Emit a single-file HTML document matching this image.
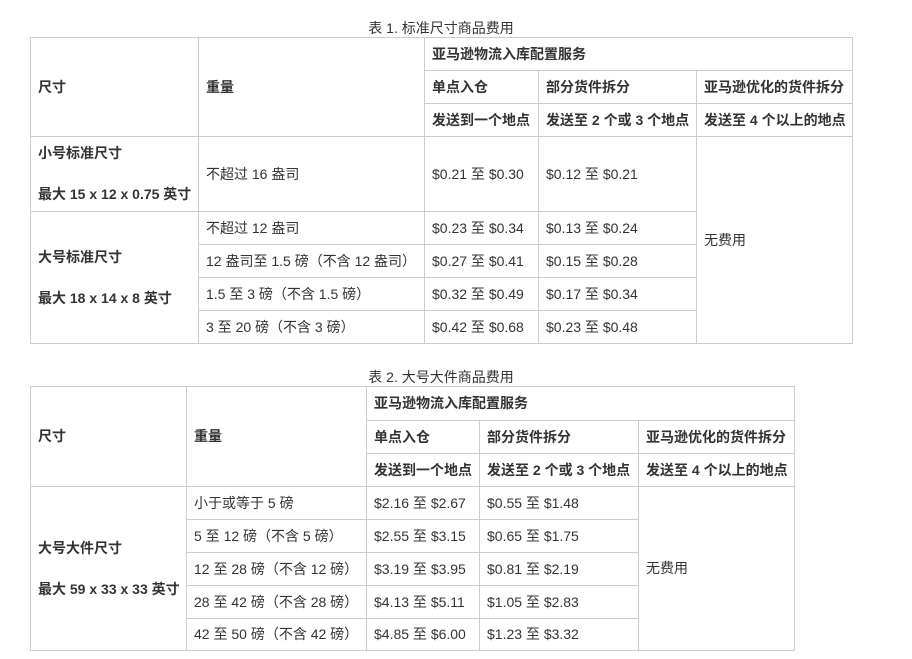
<!DOCTYPE html>
<html><head><meta charset="utf-8"><style>
body{margin:0;background:#fff;font-family:"Liberation Sans","Noto Sans CJK SC",sans-serif;color:#333;font-size:14px;}
.cap{position:absolute;left:0;width:882px;text-align:center;font-size:14px;color:#333;}
table{position:absolute;border-collapse:collapse;table-layout:fixed;}
td{border:1px solid #ccc;padding:0 7px;vertical-align:middle;white-space:nowrap;line-height:20.5px;}
.b{font-weight:bold;}
</style></head><body>
<div class="cap" style="top:18px">表 1. 标准尺寸商品费用</div>
<table style="left:30px;top:37px;width:822px">
<colgroup><col style="width:168px"><col style="width:226px"><col style="width:114px"><col style="width:158px"><col style="width:156px"></colgroup>
<tr style="height:33px"><td rowspan="3" class="b">尺寸</td><td rowspan="3" class="b">重量</td><td colspan="3" class="b">亚马逊物流入库配置服务</td></tr>
<tr style="height:33px"><td class="b">单点入仓</td><td class="b">部分货件拆分</td><td class="b">亚马逊优化的货件拆分</td></tr>
<tr style="height:33px"><td class="b">发送到一个地点</td><td class="b">发送至 2 个或 3 个地点</td><td class="b">发送至 4 个以上的地点</td></tr>
<tr style="height:75px"><td class="b">小号标准尺寸<br><br>最大 15 x 12 x 0.75 英寸</td><td>不超过 16 盎司</td><td>$0.21 至 $0.30</td><td>$0.12 至 $0.21</td><td rowspan="5">无费用</td></tr>
<tr style="height:33px"><td rowspan="4" class="b">大号标准尺寸<br><br>最大 18 x 14 x 8 英寸</td><td>不超过 12 盎司</td><td>$0.23 至 $0.34</td><td>$0.13 至 $0.24</td></tr>
<tr style="height:33px"><td>12 盎司至 1.5 磅（不含 12 盎司）</td><td>$0.27 至 $0.41</td><td>$0.15 至 $0.28</td></tr>
<tr style="height:33px"><td>1.5 至 3 磅（不含 1.5 磅）</td><td>$0.32 至 $0.49</td><td>$0.17 至 $0.34</td></tr>
<tr style="height:33px"><td>3 至 20 磅（不含 3 磅）</td><td>$0.42 至 $0.68</td><td>$0.23 至 $0.48</td></tr>
</table>
<div class="cap" style="top:367px">表 2. 大号大件商品费用</div>
<table style="left:30px;top:386px;width:764px">
<colgroup><col style="width:156px"><col style="width:180px"><col style="width:113px"><col style="width:159px"><col style="width:156px"></colgroup>
<tr style="height:34px"><td rowspan="3" class="b">尺寸</td><td rowspan="3" class="b">重量</td><td colspan="3" class="b">亚马逊物流入库配置服务</td></tr>
<tr style="height:33px"><td class="b">单点入仓</td><td class="b">部分货件拆分</td><td class="b">亚马逊优化的货件拆分</td></tr>
<tr style="height:33px"><td class="b">发送到一个地点</td><td class="b">发送至 2 个或 3 个地点</td><td class="b">发送至 4 个以上的地点</td></tr>
<tr style="height:33px"><td rowspan="5" class="b">大号大件尺寸<br><br>最大 59 x 33 x 33 英寸</td><td>小于或等于 5 磅</td><td>$2.16 至 $2.67</td><td>$0.55 至 $1.48</td><td rowspan="5">无费用</td></tr>
<tr style="height:33px"><td>5 至 12 磅（不含 5 磅）</td><td>$2.55 至 $3.15</td><td>$0.65 至 $1.75</td></tr>
<tr style="height:33px"><td>12 至 28 磅（不含 12 磅）</td><td>$3.19 至 $3.95</td><td>$0.81 至 $2.19</td></tr>
<tr style="height:33px"><td>28 至 42 磅（不含 28 磅）</td><td>$4.13 至 $5.11</td><td>$1.05 至 $2.83</td></tr>
<tr style="height:32px"><td>42 至 50 磅（不含 42 磅）</td><td>$4.85 至 $6.00</td><td>$1.23 至 $3.32</td></tr>
</table>
</body></html>
